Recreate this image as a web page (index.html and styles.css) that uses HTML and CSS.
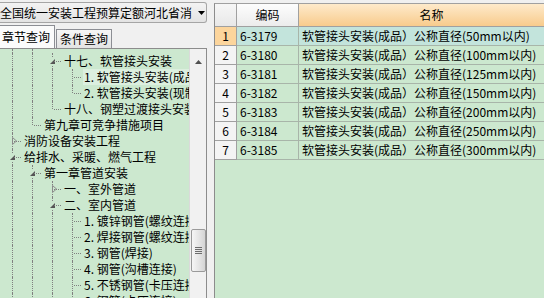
FILE: index.html
```html
<!DOCTYPE html>
<html>
<head>
    <title>定额章节查询</title>
    <link rel="stylesheet" href="styles.css">
</head>
<body>
<div class="app">
    <div class="left">
        <div class="combo">
            <span class="combo-text">全国统一安装工程预算定额河北省消耗量定额</span>
            <svg class="combo-arrow" viewBox="0 0 7 4"><polygon points="0,0 7,0 3.5,4" fill="#000"/></svg>
        </div>
        <div class="tabs">
            <div class="tab active">章节查询</div>
            <div class="tab">条件查询</div>
        </div>
        <div class="tree">
            <div class="tree-body">
                <div class="trow pad"><span class="g v"></span><span class="g v"></span></div>
                <div class="trow"><span class="g v"></span><span class="g v"></span><span class="g t"><svg viewBox="0 0 9 9"><rect width="9" height="9" fill="#cce8cf"/><polygon points="7,2 7,7 2,7" fill="#555"/></svg></span><span class="tlabel">十七、软管接头安装</span></div>
                <div class="trow"><span class="g v"></span><span class="g v"></span><span class="g v"></span><span class="g t"></span><span class="tlabel sel">1. 软管接头安装(成品)</span></div>
                <div class="trow"><span class="g v"></span><span class="g v"></span><span class="g v"></span><span class="g l"></span><span class="tlabel">2. 软管接头安装(现制)</span></div>
                <div class="trow"><span class="g v"></span><span class="g v"></span><span class="g l"></span><span class="tlabel">十八、钢塑过渡接头安装</span></div>
                <div class="trow"><span class="g v"></span><span class="g l"></span><span class="tlabel">第九章可竞争措施项目</span></div>
                <div class="trow"><span class="g t"><svg viewBox="0 0 9 9"><rect width="9" height="9" fill="#cce8cf"/><polygon points="4.5,0.5 8.5,4 4.5,7.5" fill="none" stroke="#8a8a8a"/></svg></span><span class="tlabel">消防设备安装工程</span></div>
                <div class="trow"><span class="g t"><svg viewBox="0 0 9 9"><rect width="9" height="9" fill="#cce8cf"/><polygon points="7,2 7,7 2,7" fill="#555"/></svg></span><span class="tlabel">给排水、采暖、燃气工程</span></div>
                <div class="trow"><span class="g v"></span><span class="g t"><svg viewBox="0 0 9 9"><rect width="9" height="9" fill="#cce8cf"/><polygon points="7,2 7,7 2,7" fill="#555"/></svg></span><span class="tlabel">第一章管道安装</span></div>
                <div class="trow"><span class="g v"></span><span class="g v"></span><span class="g t"><svg viewBox="0 0 9 9"><rect width="9" height="9" fill="#cce8cf"/><polygon points="4.5,0.5 8.5,4 4.5,7.5" fill="none" stroke="#8a8a8a"/></svg></span><span class="tlabel">一、室外管道</span></div>
                <div class="trow"><span class="g v"></span><span class="g v"></span><span class="g t"><svg viewBox="0 0 9 9"><rect width="9" height="9" fill="#cce8cf"/><polygon points="7,2 7,7 2,7" fill="#555"/></svg></span><span class="tlabel">二、室内管道</span></div>
                <div class="trow"><span class="g v"></span><span class="g v"></span><span class="g v"></span><span class="g t"></span><span class="tlabel">1. 镀锌钢管(螺纹连接)</span></div>
                <div class="trow"><span class="g v"></span><span class="g v"></span><span class="g v"></span><span class="g t"></span><span class="tlabel">2. 焊接钢管(螺纹连接)</span></div>
                <div class="trow"><span class="g v"></span><span class="g v"></span><span class="g v"></span><span class="g t"></span><span class="tlabel">3. 钢管(焊接)</span></div>
                <div class="trow"><span class="g v"></span><span class="g v"></span><span class="g v"></span><span class="g t"></span><span class="tlabel">4. 钢管(沟槽连接)</span></div>
                <div class="trow"><span class="g v"></span><span class="g v"></span><span class="g v"></span><span class="g t"></span><span class="tlabel">5. 不锈钢管(卡压连接)</span></div>
                <div class="trow"><span class="g v"></span><span class="g v"></span><span class="g v"></span><span class="g t"></span><span class="tlabel">6. 钢管(卡压连接)</span></div>
            </div>
            <div class="vscroll">
                <div class="sb-up"><svg viewBox="0 0 7 4"><polygon points="3.5,0 7,4 0,4" fill="#505050"/></svg></div>
                <div class="sb-thumb"><span class="grip"></span></div>
            </div>
        </div>
    </div>
    <div class="splitter"></div>
    <div class="grid">
        <div class="grow head">
            <div class="cell rn"></div>
            <div class="cell code">编码</div>
            <div class="cell name">名称</div>
        </div>
        <div class="grow cur">
            <div class="cell rn">1</div>
            <div class="cell code">6-3179</div>
            <div class="cell name">软管接头安装(成品）公称直径(50mm以内)</div>
        </div>
        <div class="grow">
            <div class="cell rn">2</div>
            <div class="cell code">6-3180</div>
            <div class="cell name">软管接头安装(成品）公称直径(100mm以内)</div>
        </div>
        <div class="grow">
            <div class="cell rn">3</div>
            <div class="cell code">6-3181</div>
            <div class="cell name">软管接头安装(成品）公称直径(125mm以内)</div>
        </div>
        <div class="grow">
            <div class="cell rn">4</div>
            <div class="cell code">6-3182</div>
            <div class="cell name">软管接头安装(成品）公称直径(150mm以内)</div>
        </div>
        <div class="grow">
            <div class="cell rn">5</div>
            <div class="cell code">6-3183</div>
            <div class="cell name">软管接头安装(成品）公称直径(200mm以内)</div>
        </div>
        <div class="grow">
            <div class="cell rn">6</div>
            <div class="cell code">6-3184</div>
            <div class="cell name">软管接头安装(成品）公称直径(250mm以内)</div>
        </div>
        <div class="grow">
            <div class="cell rn">7</div>
            <div class="cell code">6-3185</div>
            <div class="cell name">软管接头安装(成品）公称直径(300mm以内)</div>
        </div>
    </div>
</div>
</body>
</html>
```

FILE: styles.css
```css
body {
    margin: 0;
    background: #f0f0f0;
    font: 12px "Noto Sans CJK SC", "Noto Sans", sans-serif;
    color: #000;
    overflow: hidden;
}
.app {
    display: flex;
    height: 298px;
}
.left {
    width: 207px;
    flex: none;
    display: flex;
    flex-direction: column;
    padding-top: 2px;
    box-sizing: border-box;
}
.combo {
    flex: none;
    height: 21px;
    box-sizing: border-box;
    border: 1px solid #a5a5a5;
    border-left: none;
    border-radius: 0 3px 3px 0;
    background: linear-gradient(#f3f3f3, #e3e3e3);
    display: flex;
    align-items: center;
}
.combo-text {
    flex: 1;
    overflow: hidden;
    white-space: nowrap;
    line-height: 19px;
}
.combo-arrow {
    flex: none;
    width: 7px;
    height: 4px;
    margin: 0 1px 0 6px;
}
.tabs {
    flex: none;
    display: flex;
    align-items: flex-end;
    height: 25px;
}
.tab {
    height: 19px;
    line-height: 18px;
    box-sizing: border-box;
    padding: 0 3px;
    margin-left: 1px;
    border: 1px solid #8c8e94;
    border-bottom: none;
    background: linear-gradient(#f6f6f6, #e3e3e3);
}
.tab.active {
    height: 23px;
    line-height: 22px;
    margin-left: 0;
    padding: 0 4px 0 2px;
    border-left: none;
    background: #fbfbfb;
}
.tree {
    flex: 1;
    min-height: 0;
    display: flex;
    background: #cce8cf;
    border-top: 1px solid #8c8c8c;
    border-right: 1px solid #8c8c8c;
}
.tree-body {
    flex: 1;
    overflow: hidden;
    padding-left: 2px;
}
.trow {
    display: flex;
    height: 16px;
    line-height: 16px;
    white-space: nowrap;
}
.trow.pad {
    height: 4px;
}
.g {
    flex: none;
    width: 20px;
    height: 100%;
    position: relative;
}
.g::before,
.g::after {
    content: "";
    position: absolute;
}
.g.v::before,
.g.t::before {
    left: 10px;
    top: 0;
    bottom: 0;
    border-left: 1px dotted #808080;
}
.g.l::before {
    left: 10px;
    top: 0;
    height: 8px;
    border-left: 1px dotted #808080;
}
.g.t::after,
.g.l::after {
    left: 12px;
    top: 8px;
    width: 7px;
    border-top: 1px dotted #808080;
}
.g svg {
    position: absolute;
    left: 6px;
    top: 4px;
    width: 9px;
    height: 9px;
}
.tlabel {
    margin-left: 1px;
    padding: 0 1px;
}
.tlabel.sel {
    background: #dcefdf;
}
.vscroll {
    flex: none;
    width: 17px;
    box-sizing: border-box;
    background: #f1f1f1;
    border-left: 1px solid #dadada;
    display: flex;
    flex-direction: column;
    align-items: center;
}
.sb-up {
    height: 17px;
    margin-top: 4px;
    display: flex;
    align-items: center;
    justify-content: center;
}
.sb-up svg {
    width: 7px;
    height: 4px;
}
.sb-thumb {
    width: 15px;
    height: 43px;
    margin-top: 159px;
    box-sizing: border-box;
    border: 1px solid #9a9a9a;
    border-radius: 2px;
    background: linear-gradient(to right, #f6f6f6, #e6e6e6 50%, #d4d4d4);
    display: flex;
    align-items: center;
    justify-content: center;
}
.grip {
    width: 7px;
    height: 7px;
    background: repeating-linear-gradient(#6c6c6c 0 1px, transparent 1px 2px);
}
.splitter {
    flex: none;
    width: 7px;
}
.grid {
    flex: 1;
    min-width: 0;
    margin-top: 3px;
    border-left: 1px solid #8c8c8c;
    border-top: 1px solid #a0a0a0;
    background: #cce8cf;
    overflow: hidden;
}
.grow {
    display: flex;
    height: 19px;
    line-height: 18px;
}
.cell {
    flex: none;
    box-sizing: border-box;
    padding: 0 3px;
    border-right: 1px solid #a8b5a9;
    border-bottom: 1px solid #a8b5a9;
    white-space: nowrap;
    overflow: hidden;
}
.rn {
    width: 22px;
    padding: 0;
    text-align: center;
    background: #f4f4f4;
    border-color: #a0a0a0;
}
.code {
    width: 62px;
}
.name {
    width: 266px;
}
.head {
    height: 23px;
    line-height: 22px;
}
.head .cell {
    text-align: center;
    border-color: #a0a0a0;
    background: linear-gradient(#fdfdfd, #ececec);
}
.head .rn {
    background: linear-gradient(#f6f6f6, #e8e8e8);
}
.head .name {
    background: linear-gradient(#feeacb, #f8cb8c);
}
.cur .rn {
    background: #fcd59c;
}
.cur .code,
.cur .name {
    background: #c3e4dc;
}
```
